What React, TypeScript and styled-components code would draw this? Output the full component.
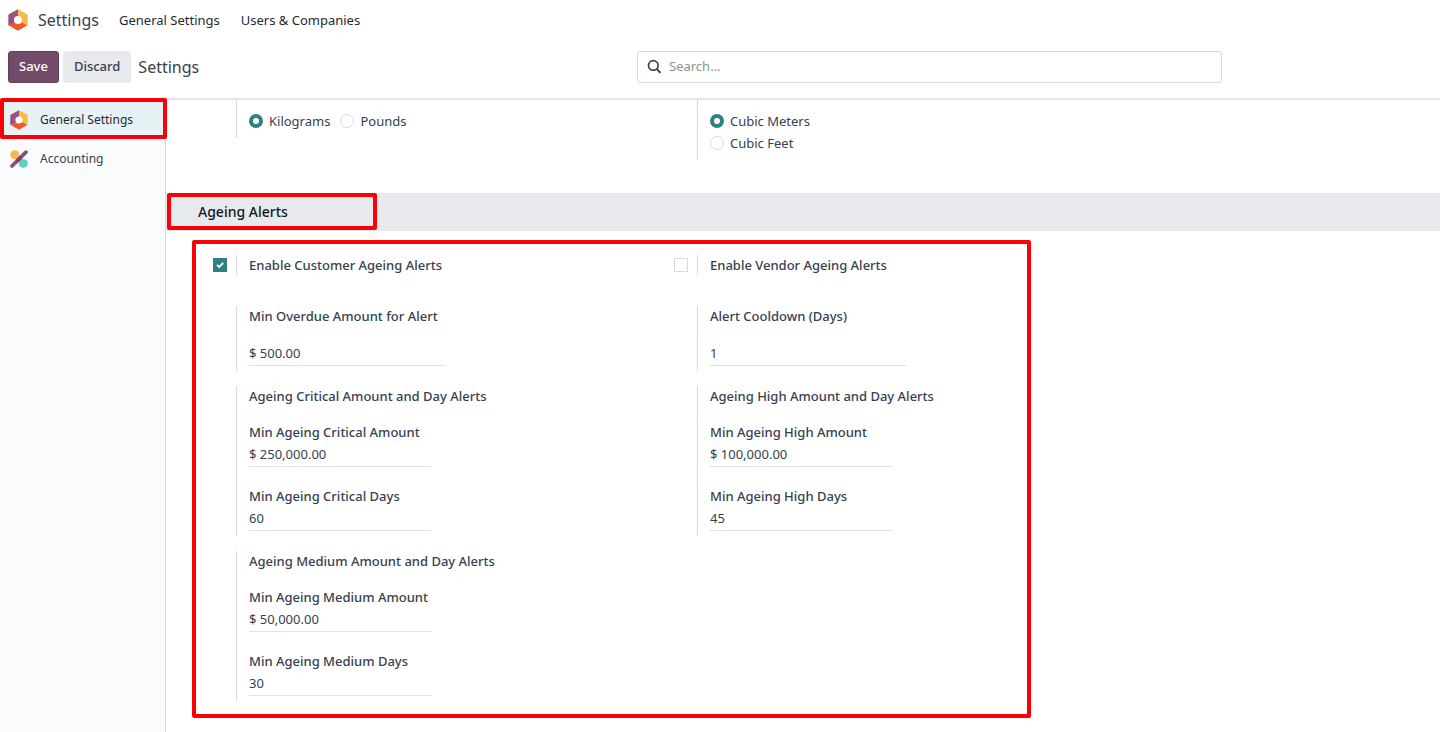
import React from "react";
import styled, { createGlobalStyle, css } from "styled-components";

const ink = "#374151";
const teal = "#2f7f84";
const line = "#d8dadd";
const red = "#fb0007";

const GlobalStyle = createGlobalStyle`
  *, *::before, *::after { box-sizing: border-box; }
  body {
    margin: 0;
    background: #fff;
    color: ${ink};
    font: 400 13px/20px "Noto Sans", "Open Sans", sans-serif;
  }
  input, button { font: inherit; color: inherit; }
`;

const Page = styled.div`
  display: flex;
  flex-direction: column;
  min-height: 100vh;
`;

const NavBar = styled.nav`
  display: flex;
  align-items: center;
  height: 40px;
  padding: 0 8px;
`;

const Brand = styled.a`
  display: flex;
  align-items: center;
  gap: 10px;
  width: 111px;
  color: ${ink};
  font-size: 16px;
  text-decoration: none;
`;

const NavLink = styled.a`
  margin-right: 21px;
  color: #1f2937;
  text-decoration: none;
`;

const ControlBar = styled.header`
  display: grid;
  grid-template-columns: 629fr 585fr 210fr;
  align-items: center;
  height: 60px;
  padding: 0 8px 5px;
  border-bottom: 2px solid #e3e5e8;
`;

const Actions = styled.div`
  display: flex;
  align-items: center;
  gap: 4px;
`;

const Button = styled.button<{ $primary?: boolean }>`
  height: 32px;
  padding: 0 10px 2px;
  border: 1px solid ${(p) => (p.$primary ? "#63405a" : "#e7e9ed")};
  border-radius: 3px;
  background: ${(p) => (p.$primary ? "#714b67" : "#e7e9ed")};
  color: ${(p) => (p.$primary ? "#fff" : ink)};
  font-weight: 500;
`;

const PageTitle = styled.h1`
  margin: 0 0 0 3px;
  font-size: 16px;
  font-weight: 400;
`;

const SearchBox = styled.label`
  display: flex;
  align-items: center;
  gap: 7px;
  height: 32px;
  padding: 0 9px;
  border: 1px solid ${line};
  border-radius: 3px;
`;

const SearchInput = styled.input`
  flex: 1;
  min-width: 0;
  padding: 0 0 2px;
  border: 0;
  outline: 0;
  background: transparent;
  &::placeholder { color: #8b9097; opacity: 1; }
`;

const Body = styled.div`
  display: flex;
  flex: 1;
`;

const Sidebar = styled.aside`
  flex: 0 0 166px;
  border-right: 1px solid ${line};
  background: #f9fbfc;
`;

const Tab = styled.a<{ $active?: boolean }>`
  position: relative;
  display: flex;
  align-items: center;
  gap: 12px;
  height: 39px;
  padding-left: 10px;
  color: ${ink};
  font-size: 12px;
  text-decoration: none;
  ${(p) =>
    p.$active &&
    css`
      background: #e6f2f3;
      color: #1f2937;
      &::after {
        content: "";
        position: absolute;
        inset: -2px -2px 0 0;
        border: 4px solid ${red};
        border-radius: 2px;
      }
    `}
`;

const Content = styled.main`
  flex: 1;
  min-width: 0;
`;

const Columns = styled.div`
  display: grid;
  grid-template-columns: 461px minmax(0, 1fr);
  align-items: start;
`;

const UnitColumns = styled(Columns)`
  min-height: 93px;
  padding-left: 30px;
`;

const Setting = styled.div`
  display: grid;
  grid-template-columns: 40px minmax(0, 1fr);
`;

const Gutter = styled.div`
  display: flex;
  align-items: center;
  justify-content: flex-end;
  padding-right: 9px;
`;

const Pane = styled.div`
  padding-left: 12px;
  border-left: 1px solid ${line};
`;

const FieldPane = styled(Pane)`
  padding-bottom: 5px;
`;

const RadioGroup = styled.div<{ $stacked?: boolean }>`
  display: flex;
  flex-direction: ${(p) => (p.$stacked ? "column" : "row")};
  column-gap: 10px;
  padding: 10px 0 6px;
`;

const Choice = styled.label`
  display: flex;
  align-items: center;
  gap: 6px;
  height: 22px;
`;

const Radio = styled.input.attrs({ type: "radio" })`
  appearance: none;
  width: 14px;
  height: 14px;
  margin: 0;
  border: 1px solid ${line};
  border-radius: 50%;
  background: #fff;
  &:checked { border: 4px solid ${teal}; }
`;

const TickWrap = styled.span`
  display: grid;
  width: 14px;
  height: 14px;
  > * { grid-area: 1 / 1; }
  > svg { pointer-events: none; }
`;

const Tick = styled.input.attrs({ type: "checkbox" })`
  appearance: none;
  width: 14px;
  height: 14px;
  margin: 0;
  border: 1px solid ${line};
  background: #fff;
  &:checked { border-color: ${teal}; background: ${teal}; }
  &:not(:checked) + svg { visibility: hidden; }
`;

const SectionBar = styled.div`
  height: 38px;
  padding-left: 1px;
  background: #e7e9ed;
`;

const SectionTitle = styled.h2`
  width: 210px;
  height: 37px;
  margin: 0;
  padding-left: 27px;
  border: 4px solid ${red};
  border-radius: 2px;
  color: #111827;
  font-size: 14px;
  font-weight: 500;
  line-height: 29px;
`;

const AlertPanel = styled.section`
  max-width: 839px;
  margin: 9px 0 14px 26px;
  padding: 11px 0 13px;
  border: 4px solid ${red};
  border-radius: 2px;
`;

const ToggleRow = styled(Columns)`
  margin-bottom: 31px;
`;

const FieldGrid = styled(Columns)`
  row-gap: 15px;
`;

const Label = styled.label`
  display: block;
  font-weight: 500;
`;

const GroupTitle = styled.div`
  margin-bottom: 16px;
  font-weight: 500;
`;

const Field = styled.div`
  & + & { margin-top: 19px; }
`;

const ValueInput = styled.input<{ $wide?: boolean }>`
  display: block;
  width: ${(p) => (p.$wide ? 197 : 182)}px;
  height: 25px;
  margin-top: ${(p) => (p.$wide ? 15 : 0)}px;
  padding: 0;
  border: 0;
  border-bottom: 1px solid #e0e2e4;
  outline: 0;
  background: transparent;
`;

function HexLogo({ size }: { size: number }) {
  return (
    <svg width={size} height={size + 2} viewBox="0 0 20 22" aria-hidden="true">
      <path d="M10 0.3 L1.2 5 Q0.3 5.5 0.3 6.5 V15.4 Q0.3 16.4 1.2 16.9 L5.6 14 L10 11 Z" fill="#985184" />
      <path d="M10 0.3 L18.8 5 Q19.7 5.5 19.7 6.5 V15.4 Q19.7 16.4 18.8 16.9 L14 14 L10 11 Z" fill="#fbb945" />
      <path d="M0.9 16.6 L6 13.6 L10 11 L14 13.6 L19.1 16.6 L11 21.3 Q10 21.9 9 21.3 Z" fill="#f0592b" />
      <circle cx="10" cy="11" r="4" fill="#fff" />
    </svg>
  );
}

function PercentLogo() {
  return (
    <svg width="18" height="18" viewBox="0 0 18 18" aria-hidden="true">
      <circle cx="4.8" cy="4.8" r="4.5" fill="#fbb54a" />
      <circle cx="13.3" cy="13.4" r="4.5" fill="#5fd3bd" />
      <path d="M2 16 L16 2.1" stroke="#8f4c7c" strokeWidth="3.7" strokeLinecap="round" />
      <path d="M6.6 11.4 L11.4 6.7" stroke="#7b3f6c" strokeWidth="3.7" />
    </svg>
  );
}

function SearchIcon() {
  return (
    <svg width="15" height="15" viewBox="0 0 15 15" fill="none" stroke={ink} aria-hidden="true">
      <circle cx="6.3" cy="6.4" r="4.8" strokeWidth="1.7" />
      <path d="M9.7 9.9 L13.4 13.9" strokeWidth="2" />
    </svg>
  );
}

function Toggle({ id, label, on }: { id: string; label: string; on?: boolean }) {
  return (
    <Setting>
      <Gutter>
        <TickWrap>
          <Tick id={id} defaultChecked={on} />
          <svg viewBox="0 0 14 14" fill="none" stroke="#fff" strokeWidth="1.8" aria-hidden="true">
            <path d="M4 7 L6.2 9 L10.2 5" />
          </svg>
        </TickWrap>
      </Gutter>
      <Pane>
        <Label htmlFor={id}>{label}</Label>
      </Pane>
    </Setting>
  );
}

function SingleField({ id, label, value }: { id: string; label: string; value: string }) {
  return (
    <Setting>
      <Gutter />
      <FieldPane>
        <Label htmlFor={id}>{label}</Label>
        <ValueInput id={id} defaultValue={value} $wide />
      </FieldPane>
    </Setting>
  );
}

function LevelFields({ level, amount, days }: { level: string; amount: string; days: string }) {
  const key = level.toLowerCase();
  return (
    <Setting>
      <Gutter />
      <FieldPane>
        <GroupTitle>{`Ageing ${level} Amount and Day Alerts`}</GroupTitle>
        <Field>
          <Label htmlFor={`${key}-amount`}>{`Min Ageing ${level} Amount`}</Label>
          <ValueInput id={`${key}-amount`} defaultValue={amount} />
        </Field>
        <Field>
          <Label htmlFor={`${key}-days`}>{`Min Ageing ${level} Days`}</Label>
          <ValueInput id={`${key}-days`} defaultValue={days} />
        </Field>
      </FieldPane>
    </Setting>
  );
}

function Units({ name, options, stacked }: { name: string; options: string[]; stacked?: boolean }) {
  return (
    <Setting>
      <Gutter />
      <Pane>
        <RadioGroup $stacked={stacked}>
          {options.map((option, i) => (
            <Choice key={option}>
              <Radio name={name} defaultChecked={i === 0} />
              {option}
            </Choice>
          ))}
        </RadioGroup>
      </Pane>
    </Setting>
  );
}

export default function App() {
  return (
    <Page>
      <GlobalStyle />
      <NavBar>
        <Brand href="#">
          <HexLogo size={20} />
          Settings
        </Brand>
        <NavLink href="#general">General Settings</NavLink>
        <NavLink href="#users">Users &amp; Companies</NavLink>
      </NavBar>
      <ControlBar>
        <Actions>
          <Button $primary>Save</Button>
          <Button>Discard</Button>
          <PageTitle>Settings</PageTitle>
        </Actions>
        <SearchBox>
          <SearchIcon />
          <SearchInput placeholder="Search..." aria-label="Search" />
        </SearchBox>
      </ControlBar>
      <Body>
        <Sidebar>
          <Tab href="#general" $active>
            <HexLogo size={18} />
            General Settings
          </Tab>
          <Tab href="#accounting">
            <PercentLogo />
            Accounting
          </Tab>
        </Sidebar>
        <Content>
          <UnitColumns>
            <Units name="weight" options={["Kilograms", "Pounds"]} />
            <Units name="volume" options={["Cubic Meters", "Cubic Feet"]} stacked />
          </UnitColumns>
          <SectionBar>
            <SectionTitle>Ageing Alerts</SectionTitle>
          </SectionBar>
          <AlertPanel>
            <ToggleRow>
              <Toggle id="customer-alerts" label="Enable Customer Ageing Alerts" on />
              <Toggle id="vendor-alerts" label="Enable Vendor Ageing Alerts" />
            </ToggleRow>
            <FieldGrid>
              <SingleField id="min-overdue" label="Min Overdue Amount for Alert" value="$ 500.00" />
              <SingleField id="cooldown" label="Alert Cooldown (Days)" value="1" />
              <LevelFields level="Critical" amount="$ 250,000.00" days="60" />
              <LevelFields level="High" amount="$ 100,000.00" days="45" />
              <LevelFields level="Medium" amount="$ 50,000.00" days="30" />
            </FieldGrid>
          </AlertPanel>
        </Content>
      </Body>
    </Page>
  );
}
